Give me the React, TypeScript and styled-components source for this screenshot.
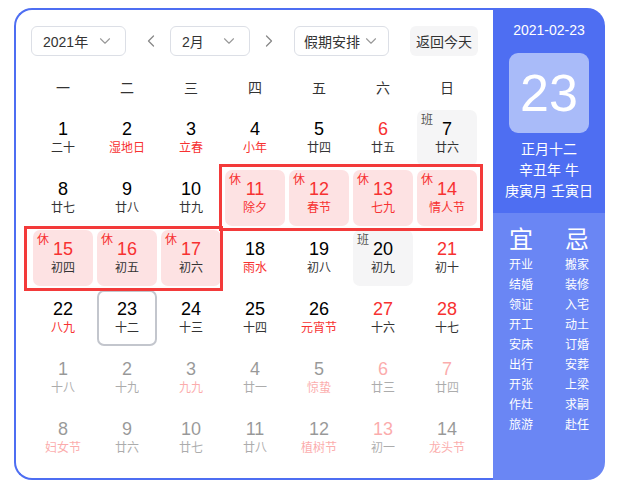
import { createGlobalStyle, styled } from "styled-components";
import { ChevronDown, ChevronLeft, ChevronRight } from "lucide-react";

const GlobalStyle = createGlobalStyle`
  body {
    margin: 0;
    background: #ffffff;
    font-family: "Liberation Sans", "Noto Sans CJK SC", sans-serif;
    color: #333;
  }
`;

type Day = {
  n: number;
  lunar: string;
  red?: boolean;
  lunarRed?: boolean;
  rest?: boolean;
  work?: boolean;
  today?: boolean;
  other?: boolean;
};

const days: Day[] = [
  { n: 1, lunar: "二十" },
  { n: 2, lunar: "湿地日", lunarRed: true },
  { n: 3, lunar: "立春", lunarRed: true },
  { n: 4, lunar: "小年", lunarRed: true },
  { n: 5, lunar: "廿四" },
  { n: 6, lunar: "廿五", red: true },
  { n: 7, lunar: "廿六", work: true },
  { n: 8, lunar: "廿七" },
  { n: 9, lunar: "廿八" },
  { n: 10, lunar: "廿九" },
  { n: 11, lunar: "除夕", rest: true, lunarRed: true },
  { n: 12, lunar: "春节", rest: true, lunarRed: true },
  { n: 13, lunar: "七九", rest: true, lunarRed: true },
  { n: 14, lunar: "情人节", rest: true, lunarRed: true },
  { n: 15, lunar: "初四", rest: true },
  { n: 16, lunar: "初五", rest: true },
  { n: 17, lunar: "初六", rest: true },
  { n: 18, lunar: "雨水", lunarRed: true },
  { n: 19, lunar: "初八" },
  { n: 20, lunar: "初九", work: true },
  { n: 21, lunar: "初十", red: true },
  { n: 22, lunar: "八九", lunarRed: true },
  { n: 23, lunar: "十二", today: true },
  { n: 24, lunar: "十三" },
  { n: 25, lunar: "十四" },
  { n: 26, lunar: "元宵节", lunarRed: true },
  { n: 27, lunar: "十六", red: true },
  { n: 28, lunar: "十七", red: true },
  { n: 1, lunar: "十八", other: true },
  { n: 2, lunar: "十九", other: true },
  { n: 3, lunar: "九九", lunarRed: true, other: true },
  { n: 4, lunar: "廿一", other: true },
  { n: 5, lunar: "惊蛰", lunarRed: true, other: true },
  { n: 6, lunar: "廿三", red: true, other: true },
  { n: 7, lunar: "廿四", red: true, other: true },
  { n: 8, lunar: "妇女节", lunarRed: true, other: true },
  { n: 9, lunar: "廿六", other: true },
  { n: 10, lunar: "廿七", other: true },
  { n: 11, lunar: "廿八", other: true },
  { n: 12, lunar: "植树节", lunarRed: true, other: true },
  { n: 13, lunar: "初一", red: true, other: true },
  { n: 14, lunar: "龙头节", lunarRed: true, other: true },
];

const weekdays = ["一", "二", "三", "四", "五", "六", "日"];

const good = ["开业", "结婚", "领证", "开工", "安床", "出行", "开张", "作灶", "旅游"];
const bad = ["搬家", "装修", "入宅", "动土", "订婚", "安葬", "上梁", "求嗣", "赴任"];

const App = () => {
  return (
    <>
      <GlobalStyle />
      <Wrapper>
        <Main>
          <Toolbar>
            <Select $width={95}>
              <span>2021年</span>
              <ChevronDown size={18} strokeWidth={1.5} color="#999" />
            </Select>
            <Arrow $shift={6}>
              <ChevronLeft size={20} strokeWidth={1.5} color="#888" />
            </Arrow>
            <Select $width={80}>
              <span>2月</span>
              <ChevronDown size={18} strokeWidth={1.5} color="#999" />
            </Select>
            <Arrow $shift={-6}>
              <ChevronRight size={20} strokeWidth={1.5} color="#888" />
            </Arrow>
            <Select $width={95} $gap>
              <span>假期安排</span>
              <ChevronDown size={18} strokeWidth={1.5} color="#999" />
            </Select>
            <TodayButton>返回今天</TodayButton>
          </Toolbar>

          <WeekHeader>
            {weekdays.map((w) => (
              <WeekLabel key={w}>{w}</WeekLabel>
            ))}
          </WeekHeader>

          <Grid>
            {days.map((d, i) => (
              <Cell
                key={i}
                $rest={d.rest}
                $work={d.work}
                $today={d.today}
                $other={d.other}
              >
                {d.rest && <Badge $rest>休</Badge>}
                {d.work && <Badge>班</Badge>}
                <DayNum $red={d.red || d.rest}>{d.n}</DayNum>
                <Lunar $red={d.lunarRed}>{d.lunar}</Lunar>
              </Cell>
            ))}
            <Highlight style={{ left: 186, top: 54, width: 264, height: 67 }} />
            <Highlight style={{ left: -9, top: 116, width: 199, height: 65 }} />
          </Grid>
        </Main>

        <Side>
          <SideTop>
            <DateText>2021-02-23</DateText>
            <BigDay>23</BigDay>
            <InfoLine>正月十二</InfoLine>
            <InfoLine>辛丑年 牛</InfoLine>
            <InfoLine>庚寅月 壬寅日</InfoLine>
          </SideTop>
          <SideBottom>
            <Column>
              <ColumnTitle>宜</ColumnTitle>
              {good.map((g) => (
                <ColumnItem key={g}>{g}</ColumnItem>
              ))}
            </Column>
            <Column>
              <ColumnTitle>忌</ColumnTitle>
              {bad.map((b) => (
                <ColumnItem key={b}>{b}</ColumnItem>
              ))}
            </Column>
          </SideBottom>
        </Side>
      </Wrapper>
    </>
  );
};

export default App;

const Wrapper = styled.div`
  display: flex;
  margin: 8px 0 0 14px;
  width: 591px;
  height: 472px;
`;

const Main = styled.div`
  width: 479px;
  box-sizing: border-box;
  border: 2px solid #4e6ef2;
  border-right: none;
  border-radius: 18px 0 0 18px;
  padding: 16px 0 0 15px;
`;

const Toolbar = styled.div`
  display: flex;
  align-items: center;
  height: 30px;
`;

const Select = styled.div<{ $width: number; $gap?: boolean }>`
  display: flex;
  align-items: center;
  justify-content: space-between;
  box-sizing: border-box;
  width: ${(p) => p.$width}px;
  height: 30px;
  padding: 0 ${(p) => (p.$gap ? 8 : 11)}px 0 ${(p) => (p.$gap ? 9 : 11)}px;
  border: 1px solid #dcdfe6;
  border-radius: 6px;
  font-size: 14px;
  color: #333;
  margin-right: ${(p) => (p.$gap ? 21 : 0)}px;
`;

const Arrow = styled.div<{ $shift: number }>`
  display: flex;
  align-items: center;
  justify-content: center;
  box-sizing: border-box;
  width: 44px;
  height: 30px;
  padding-left: ${(p) => Math.max(p.$shift, 0)}px;
  padding-right: ${(p) => Math.max(-p.$shift, 0)}px;
`;

const TodayButton = styled.div`
  display: flex;
  align-items: center;
  justify-content: center;
  width: 68px;
  height: 30px;
  border-radius: 6px;
  background: #f5f5f6;
  font-size: 14px;
  color: #333;
`;

const WeekHeader = styled.div`
  display: grid;
  grid-template-columns: repeat(7, 60px);
  column-gap: 4px;
  margin: 14px 0 4px 2px;
  height: 36px;
`;

const WeekLabel = styled.div`
  text-align: center;
  line-height: 36px;
  font-size: 14px;
  color: #333;
`;

const Grid = styled.div`
  position: relative;
  display: grid;
  grid-template-columns: repeat(7, 60px);
  grid-auto-rows: 56px;
  gap: 4px;
  margin-left: 2px;
`;

const Cell = styled.div<{
  $rest?: boolean;
  $work?: boolean;
  $today?: boolean;
  $other?: boolean;
}>`
  position: relative;
  display: flex;
  flex-direction: column;
  align-items: center;
  box-sizing: border-box;
  padding-top: ${(p) => (p.$today ? 7 : 9)}px;
  border-radius: 7px;
  background: ${(p) => (p.$rest ? "#fde2e3" : p.$work ? "#f5f5f6" : "transparent")};
  border: ${(p) => (p.$today ? "2px solid #c3c6cd" : "none")};
  opacity: ${(p) => (p.$other ? 0.4 : 1)};
`;

const Badge = styled.span<{ $rest?: boolean }>`
  position: absolute;
  left: 4px;
  top: 2px;
  font-size: 12px;
  line-height: 16px;
  color: ${(p) => (p.$rest ? "#f73131" : "#555")};
`;

const DayNum = styled.div<{ $red?: boolean }>`
  font-size: 18px;
  line-height: 20px;
  color: ${(p) => (p.$red ? "#f73131" : "#000")};
`;

const Lunar = styled.div<{ $red?: boolean }>`
  font-size: 12px;
  line-height: 18px;
  color: ${(p) => (p.$red ? "#f73131" : "#333")};
  white-space: nowrap;
`;

const Highlight = styled.div`
  position: absolute;
  box-sizing: border-box;
  border: 3px solid #f33a3a;
  pointer-events: none;
`;

const Side = styled.div`
  display: flex;
  flex-direction: column;
  width: 112px;
  border-radius: 0 18px 18px 0;
  overflow: hidden;
  color: #fff;
`;

const SideTop = styled.div`
  display: flex;
  flex-direction: column;
  align-items: center;
  height: 205px;
  background: #4e6ef2;
  padding-top: 13px;
  box-sizing: border-box;
`;

const DateText = styled.div`
  font-size: 14px;
  line-height: 18px;
`;

const BigDay = styled.div`
  display: flex;
  align-items: center;
  justify-content: center;
  width: 80px;
  height: 80px;
  margin: 14px 0 6px;
  border-radius: 9px;
  background: #a9bbf9;
  font-size: 52px;
`;

const InfoLine = styled.div`
  font-size: 14px;
  line-height: 21px;
  white-space: nowrap;
`;

const SideBottom = styled.div`
  flex: 1;
  display: grid;
  grid-template-columns: 1fr 1fr;
  background: #6a86f4;
  padding-top: 12px;
`;

const Column = styled.div`
  display: flex;
  flex-direction: column;
  align-items: center;
`;

const ColumnTitle = styled.div`
  font-size: 24px;
  line-height: 30px;
`;

const ColumnItem = styled.div`
  font-size: 12px;
  line-height: 20px;
`;
